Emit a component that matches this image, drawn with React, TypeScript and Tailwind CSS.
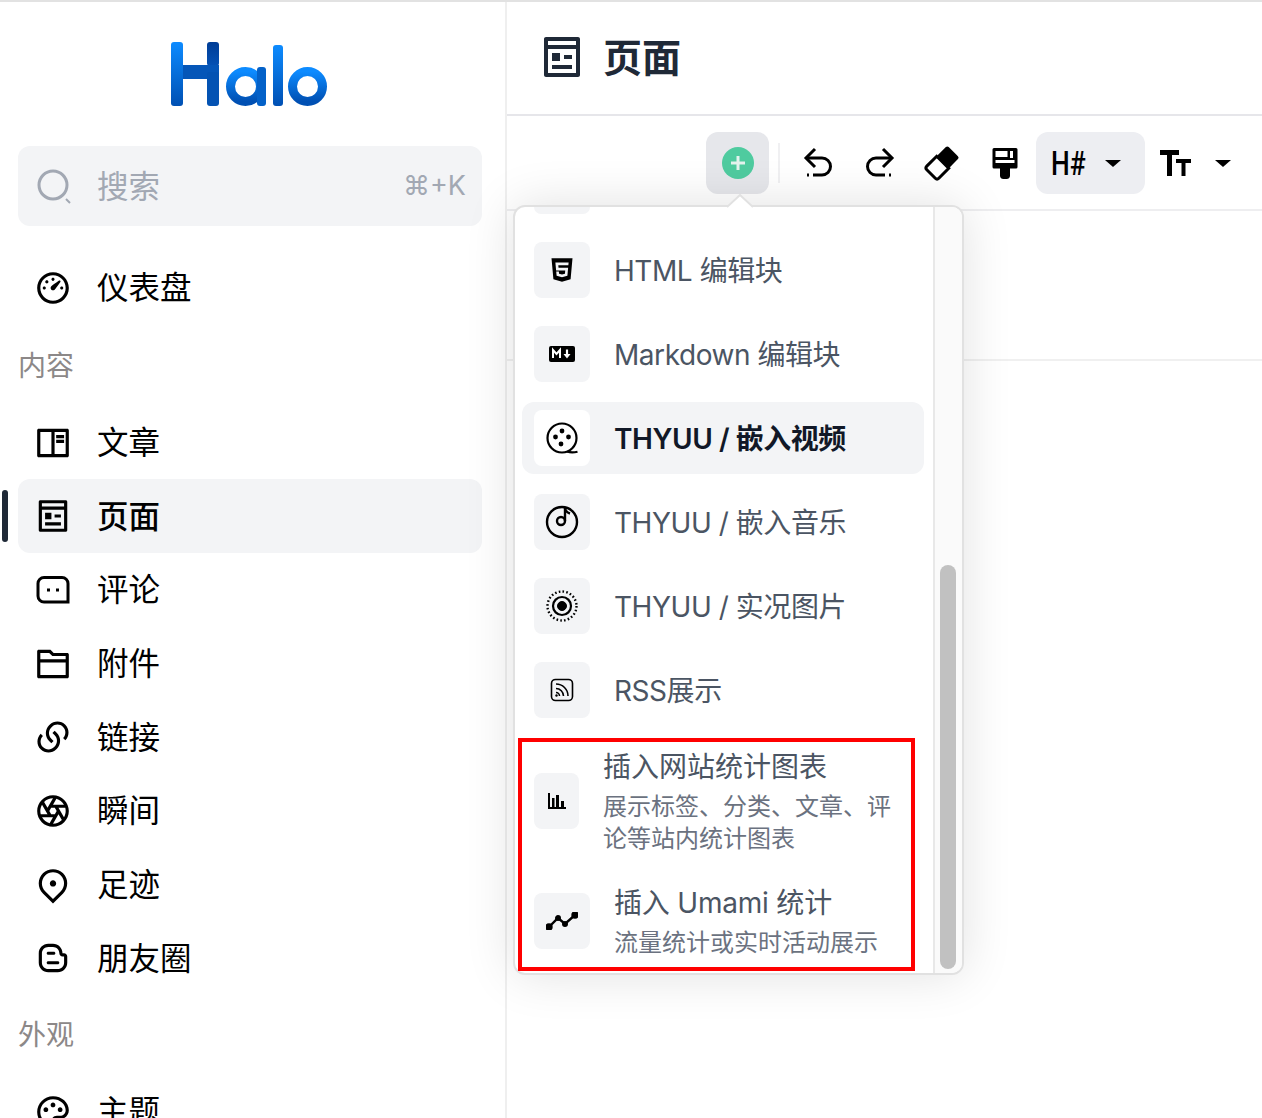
import type { ReactNode } from "react";
import {
  RiBloggerLine,
  RiBookReadLine,
  RiCameraLensLine,
  RiDashboard3Line,
  RiFolder2Line,
  RiHtml5Fill,
  RiLinksLine,
  RiMapPin2Line,
  RiPagesLine,
  RiPaletteLine,
} from "react-icons/ri";

const FONT = "font-['Inter','Noto_Sans_CJK_SC',sans-serif]";

function Logo() {
  return (
    <svg width="157" height="64" viewBox="0 0 157 64">
      <defs>
        <linearGradient id="halo" x1="0" y1="0" x2="0" y2="1">
          <stop offset="0" stopColor="#0d8bff" />
          <stop offset="1" stopColor="#0050b3" />
        </linearGradient>
        <linearGradient id="haloDark" x1="0" y1="0" x2="0" y2="1">
          <stop offset="0" stopColor="#003d96" />
          <stop offset="1" stopColor="#0552b5" />
        </linearGradient>
      </defs>
      <rect x="1" y="0" width="12" height="64" rx="3" fill="url(#halo)" />
      <rect x="37" y="0" width="12" height="24" rx="3" fill="url(#haloDark)" />
      <rect x="13" y="23" width="36" height="14" fill="#0556b8" />
      <rect x="37" y="30" width="12" height="34" rx="3" fill="#0453b3" />
      <circle cx="75.5" cy="44.5" r="15" fill="none" stroke="url(#halo)" strokeWidth="9" />
      <rect x="87" y="25" width="9" height="39" rx="3" fill="#0461c8" />
      <rect x="103" y="3" width="10" height="61" rx="3" fill="url(#halo)" />
      <circle cx="137.5" cy="44.5" r="15" fill="none" stroke="url(#halo)" strokeWidth="9" />
    </svg>
  );
}

function CommentIcon() {
  return (
    <svg width="38" height="38" viewBox="0 0 38 38" fill="none">
      <path d="M10 6.500h18a6 6 0 0 1 6 6v18.500H10a6 6 0 0 1-6-6V12.500a6 6 0 0 1 6-6z" stroke="currentColor" strokeWidth="3" />
      <rect x="13" y="17.500" width="3" height="3" fill="currentColor" />
      <rect x="22" y="17.500" width="3" height="3" fill="currentColor" />
    </svg>
  );
}

function NavItem({ icon, label, active }: { icon: ReactNode; label: string; active?: boolean }) {
  return (
    <div className={`relative flex h-[73.7px] items-center rounded-xl px-4 text-[31.5px] text-black ${active ? "bg-[#f3f4f6] font-medium" : ""}`}>
      {active && <span className="absolute left-[-16px] top-[11px] h-[52px] w-[6px] rounded-full bg-[#1f2937]" />}
      <span className="flex w-[38px] shrink-0 items-center justify-center">{icon}</span>
      <span className="ml-[25px]">{label}</span>
    </div>
  );
}

function Sidebar() {
  return (
    <aside className="h-full w-[507px] shrink-0 overflow-hidden border-r-2 border-[#efefef] bg-white pl-[18px] pr-[23px]">
      <div className="flex h-[144px] items-start justify-center pr-[3px] pt-[40px]">
        <Logo />
      </div>
      <div className="flex h-[80px] items-center rounded-xl bg-[#f3f4f6] pl-[18px] pr-4 text-[#a2a8b3]">
        <svg width="36" height="36" viewBox="0 0 36 36" fill="none" stroke="currentColor" strokeWidth="3">
          <circle cx="17" cy="17" r="14" />
          <path d="M30 31l4 4" strokeWidth="2" />
        </svg>
        <span className="ml-[25px] pt-[2px] text-[31.5px]">搜索</span>
        <span className="ml-auto text-[27px]">⌘+K</span>
      </div>
      <div className="mt-[25px]">
        <NavItem icon={<RiDashboard3Line size={38} />} label="仪表盘" />
      </div>
      <div className="flex h-[81px] items-center pt-[2px] text-[28px] text-[#8c8888]">内容</div>
      <NavItem icon={<RiBookReadLine size={38} />} label="文章" />
      <NavItem active icon={<RiPagesLine size={38} />} label="页面" />
      <NavItem icon={<CommentIcon />} label="评论" />
      <NavItem icon={<RiFolder2Line size={38} />} label="附件" />
      <NavItem icon={<RiLinksLine size={38} />} label="链接" />
      <NavItem icon={<RiCameraLensLine size={38} />} label="瞬间" />
      <NavItem icon={<RiMapPin2Line size={38} />} label="足迹" />
      <NavItem icon={<RiBloggerLine size={38} />} label="朋友圈" />
      <div className="flex h-[80px] items-center text-[28px] text-[#8c8888]">外观</div>
      <NavItem icon={<RiPaletteLine size={38} />} label="主题" />
    </aside>
  );
}

function Caret() {
  return <span className="h-0 w-0 border-x-[8px] border-t-[7px] border-x-transparent border-t-black" />;
}

function UndoIcon({ flip }: { flip?: boolean }) {
  return (
    <svg className={flip ? "-scale-x-100" : ""} width="30" height="32" viewBox="0 0 30 32" fill="none" stroke="black" strokeWidth="3">
      <path d="M12 2L3 11l9 9" />
      <path d="M4 11h15a7.500 7.500 0 0 1 0 17h-9" />
      <path d="M4 28h3" strokeDasharray="2 1" />
    </svg>
  );
}

function EraserIcon() {
  return (
    <svg width="36" height="36" viewBox="0 0 36 36">
      <g transform="rotate(45 18 18)">
        <rect x="9.500" y="2" width="17" height="15" rx="2" fill="black" />
        <path d="M9.500 17h17v14a2.500 2.500 0 0 1-2.500 2.500h-12a2.500 2.500 0 0 1-2.500-2.500z" fill="white" stroke="black" strokeWidth="3" />
      </g>
    </svg>
  );
}

function BrushIcon() {
  return (
    <svg width="28" height="32" viewBox="0 0 28 32" fill="black">
      <path d="M3 1h22a1.500 1.500 0 0 1 1.500 1.500V20a1.500 1.500 0 0 1-1.500 1.500h-6V29a3.500 3.500 0 0 1-3.500 3h-3A3.500 3.500 0 0 1 9 29v-7.500H3A1.500 1.500 0 0 1 1.500 20V2.500A1.500 1.500 0 0 1 3 1z" />
      <rect x="4.500" y="4" width="12" height="6" fill="white" />
      <rect x="19" y="4" width="3" height="7" fill="white" />
      <rect x="4.500" y="13" width="19" height="3" fill="white" />
    </svg>
  );
}

function FontSizeIcon() {
  return (
    <svg width="32" height="26" viewBox="0 0 32 26" fill="black">
      <path d="M0 0h19v5h-7v21H7V5H0z" />
      <path d="M16 9h15v4h-5.500v13h-4V13H16z" />
    </svg>
  );
}

function Toolbar() {
  return (
    <div className="flex h-[95px] items-center justify-end border-b-2 border-[#eeeef0] pr-[17px] pt-[1px]">
      <div className="flex h-[62px] w-[63px] items-center justify-center rounded-xl bg-[#e6e7eb]">
        <span className="flex h-[32px] w-[32px] items-center justify-center rounded-full bg-[#4fcb9f]">
          <svg width="18" height="18" viewBox="0 0 18 18">
            <path d="M9 2v14M2 9h14" stroke="#e4f3ee" strokeWidth="3" />
          </svg>
        </span>
      </div>
      <span className="ml-[9px] mr-[7px] h-[40px] w-[2px] bg-[#f0f0f2]" />
      <div className="flex w-[62px] justify-center"><UndoIcon /></div>
      <div className="flex w-[62px] justify-center"><UndoIcon flip /></div>
      <div className="flex w-[62px] justify-center"><EraserIcon /></div>
      <div className="flex w-[63px] justify-center"><BrushIcon /></div>
      <div className="flex h-[62px] w-[109px] items-center rounded-xl bg-[#edeef2] pl-[15px]">
        <span className="w-[34px] origin-left scale-x-[0.8] font-['Roboto',sans-serif] text-[33px] font-medium leading-none">H#</span>
        <span className="ml-[20px] flex"><Caret /></span>
      </div>
      <div className="flex w-[100px] items-center pl-[15px]">
        <FontSizeIcon />
        <span className="ml-[23px] flex"><Caret /></span>
      </div>
    </div>
  );
}

function MarkdownIcon() {
  return (
    <svg width="26" height="16" viewBox="0 0 26 16">
      <rect width="26" height="16" rx="2" fill="black" />
      <path d="M4 12V4l3.500 4L11 4v8" fill="none" stroke="white" strokeWidth="2" />
      <path d="M18 3.500v5" stroke="white" strokeWidth="2.200" />
      <path d="M14.500 8h7L18 12.500z" fill="white" />
    </svg>
  );
}

function ReelIcon() {
  return (
    <svg width="34" height="34" viewBox="0 0 34 34" fill="none" stroke="currentColor" strokeWidth="2.200">
      <circle cx="17" cy="17" r="14.500" />
      <path d="M22 30.500c3 1 7 1 10.500 .2" />
      <g fill="currentColor" stroke="none">
        <circle cx="17" cy="10" r="2.400" />
        <circle cx="10.500" cy="16" r="2.400" />
        <circle cx="23.500" cy="16" r="2.400" />
        <circle cx="16" cy="23" r="2.400" />
      </g>
    </svg>
  );
}

function MusicIcon() {
  return (
    <svg width="34" height="34" viewBox="0 0 34 34" fill="none" stroke="currentColor" strokeWidth="2.400">
      <circle cx="17" cy="17" r="15" />
      <circle cx="16" cy="16" r="4" />
      <path d="M20 16V2c0 3 2 5.500 5 6.500" />
    </svg>
  );
}

function LiveIcon() {
  return (
    <svg width="32" height="32" viewBox="0 0 32 32" fill="none" stroke="currentColor">
      <circle cx="16" cy="16" r="14.500" strokeWidth="2.400" strokeDasharray="1.600 2.200" />
      <circle cx="16" cy="16" r="9" strokeWidth="2.200" />
      <circle cx="16" cy="16" r="4.500" fill="currentColor" />
    </svg>
  );
}

function RssIcon() {
  return (
    <svg width="24" height="24" viewBox="0 0 24 24" fill="none" stroke="currentColor" strokeWidth="1.600">
      <rect x="1.500" y="1.500" width="21" height="21" rx="4" />
      <path d="M6 10.500a7.500 7.500 0 0 1 7.500 7.500M6 6a12 12 0 0 1 12 12" />
      <path d="M6 14.500a3.500 3.500 0 0 1 3.500 3.500" />
      <circle cx="6.500" cy="17.500" r="1.200" fill="currentColor" stroke="none" />
    </svg>
  );
}

function BarsIcon() {
  return (
    <svg width="18" height="16" viewBox="0 0 18 16" fill="currentColor">
      <rect x="0" y="0" width="2" height="16" />
      <rect x="0" y="14" width="18" height="2" />
      <rect x="4" y="5" width="2.500" height="10" />
      <rect x="8" y="2" width="3" height="13" />
      <rect x="13" y="8" width="3" height="7" />
    </svg>
  );
}

function TrendIcon() {
  return (
    <svg width="32" height="18" viewBox="0 0 32 18" fill="none" stroke="currentColor" strokeWidth="2.400">
      <path d="M3 15l9-9 7 6 10-9" />
      <circle cx="3" cy="15" r="2.500" fill="currentColor" />
      <circle cx="12" cy="6" r="1.800" fill="currentColor" />
      <circle cx="19" cy="12" r="1.800" fill="currentColor" />
      <circle cx="29" cy="3" r="2.500" fill="currentColor" />
    </svg>
  );
}

function MenuRow({ icon, label, active }: { icon: ReactNode; label: string; active?: boolean }) {
  return (
    <div className={`flex h-[72px] items-center rounded-xl px-3 ${active ? "bg-[#f3f4f6]" : ""}`}>
      <span className={`flex h-[56px] w-[56px] shrink-0 items-center justify-center rounded-lg text-black ${active ? "bg-white" : "bg-[#f3f4f6]"}`}>
        {icon}
      </span>
      <span className={`ml-6 pt-[2px] text-[28px] leading-10 tracking-[-0.45px] ${active ? "font-semibold text-[#111827]" : "text-[#4b5563]"}`}>{label}</span>
    </div>
  );
}

function InsertMenu() {
  return (
    <div className="absolute left-[513px] top-[203px] z-10 h-[770px] w-[451px] rounded-xl border-2 border-[#e1e1e1] bg-white shadow-[0_0_50px_rgba(0,0,0,0.12)]">
      <svg className="absolute left-[212px] top-[-13px]" width="26" height="14" viewBox="0 0 26 14">
        <path d="M0 13L13 1l13 12" fill="white" stroke="#e1e1e1" strokeWidth="2" />
      </svg>
      <div className="flex h-full overflow-hidden rounded-[10px]">
        <div className="w-[418px] shrink-0 pl-[7px] pr-[9px]">
          <div className="ml-3 h-[7px] w-[56px] rounded-b-lg bg-[#f3f4f6]" />
          <div className="mt-5 flex flex-col gap-3">
            <MenuRow icon={<RiHtml5Fill size={28} />} label="HTML 编辑块" />
            <MenuRow icon={<MarkdownIcon />} label="Markdown 编辑块" />
            <MenuRow active icon={<ReelIcon />} label="THYUU / 嵌入视频" />
            <MenuRow icon={<MusicIcon />} label="THYUU / 嵌入音乐" />
            <MenuRow icon={<LiveIcon />} label="THYUU / 实况图片" />
            <MenuRow icon={<RssIcon />} label="RSS展示" />
          </div>
          <div className="mt-5 flex items-center px-3">
            <span className="flex h-[56px] w-[45px] shrink-0 items-center justify-center rounded-lg bg-[#f3f4f6] text-black">
              <BarsIcon />
            </span>
            <div className="ml-6 w-[292px] pt-[1px]">
              <div className="text-[28px] leading-10 text-[#4b5563]">插入网站统计图表</div>
              <div className="mt-1 text-[24px] leading-8 text-[#6b7280]">展示标签、分类、文章、评论等站内统计图表</div>
            </div>
          </div>
          <div className="mt-[27px] flex items-center px-3">
            <span className="flex h-[56px] w-[56px] shrink-0 items-center justify-center rounded-lg bg-[#f3f4f6] text-black">
              <TrendIcon />
            </span>
            <div className="ml-6 pt-[1px]">
              <div className="text-[28px] leading-10 tracking-[-0.2px] text-[#4b5563]">插入 Umami 统计</div>
              <div className="mt-1 text-[24px] leading-8 text-[#6b7280]">流量统计或实时活动展示</div>
            </div>
          </div>
        </div>
        <div className="relative flex-1 border-l-2 border-[#e8e8e8] bg-[#fafafa]">
          <span className="absolute left-[5px] top-[358px] h-[404px] w-[16px] rounded-full bg-[#c1c1c1]" />
        </div>
      </div>
      <div className="absolute left-[3px] top-[531px] h-[233px] w-[397px] border-4 border-[#ff0000]" />
    </div>
  );
}

export default function App() {
  return (
    <div className={`relative h-[1118px] w-[1262px] overflow-hidden border-t-2 border-[#e2e2e2] bg-white ${FONT}`}>
      <div className="flex h-full">
        <Sidebar />
        <main className="min-w-0 flex-1">
          <header className="flex h-[114px] items-center border-b-2 border-[#e6e6ea] pb-[2px] pl-[31px] text-[#1f2937]">
            <RiPagesLine size={48} />
            <h1 className="ml-[17px] pt-[3px] text-[39px] font-bold">页面</h1>
          </header>
          <Toolbar />
          <div className="h-[150px] border-b-2 border-[#f0f0f0]" />
        </main>
      </div>
      <InsertMenu />
    </div>
  );
}
